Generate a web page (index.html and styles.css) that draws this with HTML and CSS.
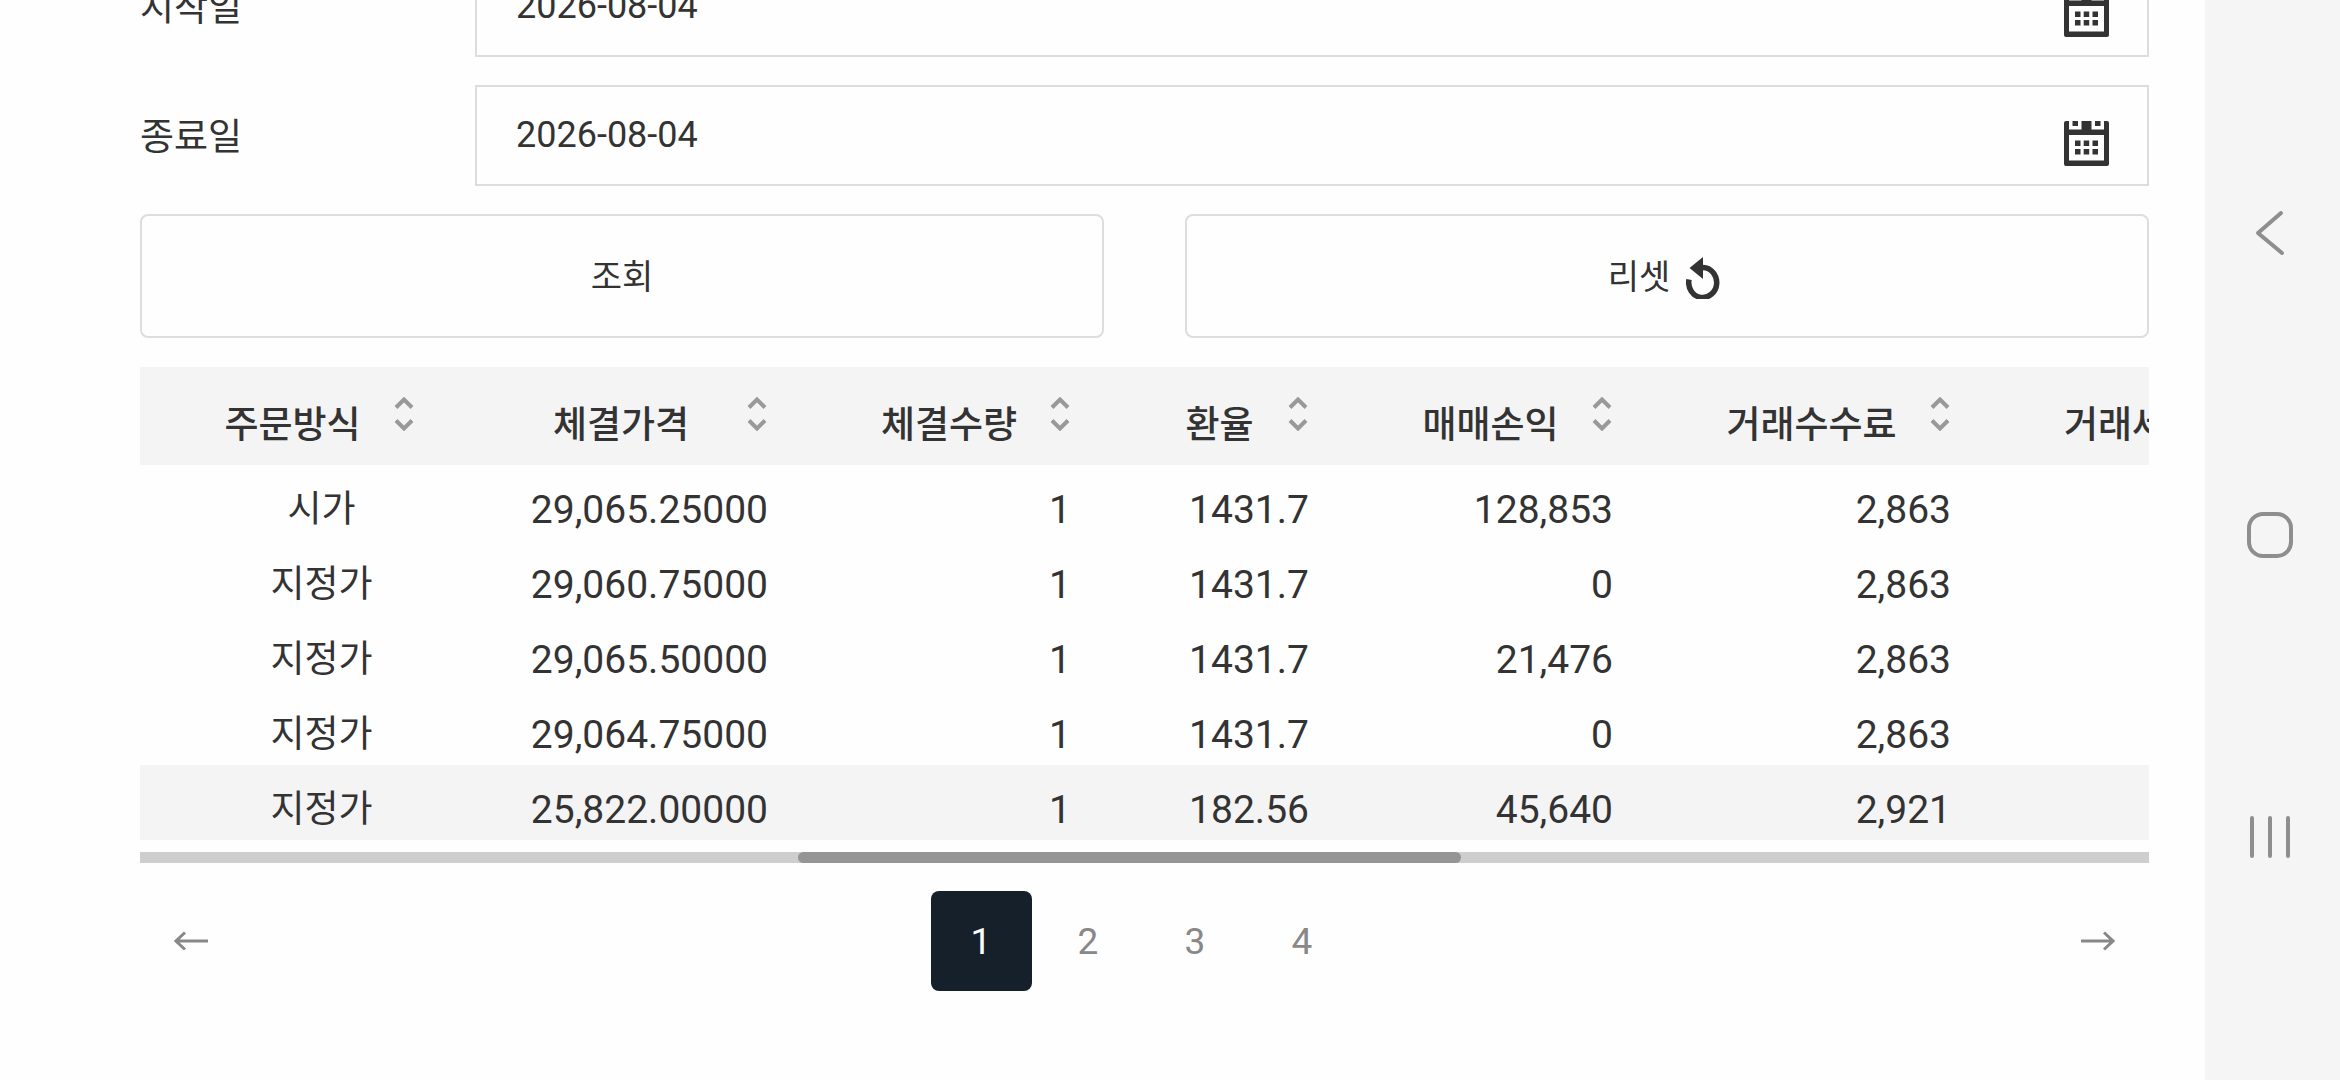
FILE: index.html
```html
<!DOCTYPE html>
<html lang="ko">
<head>
<meta charset="utf-8">
<meta name="viewport" content="width=device-width, initial-scale=1">
<title>체결내역</title>
<link rel="stylesheet" href="styles.css">
</head>
<body>
<svg class="symbols" aria-hidden="true">
  <symbol id="calendar" viewBox="0 0 45 45">
    <path fill-rule="evenodd" d="M2 0H5V8.500H17.500V0H27.500V8.500H40V0H43Q45 0 45 2V43Q45 45 43 45H2Q0 45 0 43V2Q0 0 2 0ZM5 14V39.500H40V14Z"/>
    <path d="M8.500 0H14V5H8.500ZM31 0H36.500V5H31ZM11 19.500H16.500V25H11ZM19.700 19.500H25.200V25H19.700ZM28.500 19.500H34V25H28.500ZM11 28H16.500V33.500H11ZM19.700 28H25.200V33.500H19.700ZM28.500 28H34V33.500H28.500Z"/>
  </symbol>
  <symbol id="sort" viewBox="0 0 20 34">
    <path d="M2 10.500 10 2.500 18 10.500M2 23.500 10 31.500 18 23.500"/>
  </symbol>
</svg>
<div class="screen">
  <main class="content">
    <form class="search">
      <div class="row">
        <label class="row-label" for="start">시작일</label>
        <div class="field">
          <input class="field-input" id="start" type="text" value="2026-08-04">
          <button class="field-button" type="button" aria-label="시작일 선택"><svg class="calendar"><use href="#calendar"/></svg></button>
        </div>
      </div>
      <div class="row">
        <label class="row-label" for="end">종료일</label>
        <div class="field">
          <input class="field-input" id="end" type="text" value="2026-08-04">
          <button class="field-button" type="button" aria-label="종료일 선택"><svg class="calendar"><use href="#calendar"/></svg></button>
        </div>
      </div>
      <div class="actions">
        <button class="action" type="button"><span class="action-label">조회</span></button>
        <button class="action" type="button"><span class="action-label">리셋</span>
          <svg class="reset" viewBox="0 0 34 42"><path d="M3 22.500A14 15 0 1 0 17 10.500" fill="none" stroke="currentColor" stroke-width="5.500"/><path d="M17 0V22L3.500 11Z" fill="currentColor"/></svg>
        </button>
      </div>
    </form>

    <div class="table-view">
      <table class="trades">
        <colgroup><col class="c-method"><col class="c-price"><col class="c-qty"><col class="c-rate"><col class="c-profit"><col class="c-fee"><col class="c-tax"></colgroup>
        <thead>
          <tr>
            <th><button class="sort" type="button"><span class="sort-label">주문방식</span><svg class="sort-icon"><use href="#sort"/></svg></button></th>
            <th><button class="sort" type="button"><span class="sort-label">체결가격</span><svg class="sort-icon"><use href="#sort"/></svg></button></th>
            <th><button class="sort" type="button"><span class="sort-label">체결수량</span><svg class="sort-icon"><use href="#sort"/></svg></button></th>
            <th><button class="sort" type="button"><span class="sort-label">환율</span><svg class="sort-icon"><use href="#sort"/></svg></button></th>
            <th><button class="sort" type="button"><span class="sort-label">매매손익</span><svg class="sort-icon"><use href="#sort"/></svg></button></th>
            <th><button class="sort" type="button"><span class="sort-label">거래수수료</span><svg class="sort-icon"><use href="#sort"/></svg></button></th>
            <th><button class="sort" type="button"><span class="sort-label">거래세</span></button></th>
          </tr>
        </thead>
        <tbody>
          <tr><td>시가</td><td>29,065.25000</td><td>1</td><td>1431.7</td><td>128,853</td><td>2,863</td><td></td></tr>
          <tr><td>지정가</td><td>29,060.75000</td><td>1</td><td>1431.7</td><td>0</td><td>2,863</td><td></td></tr>
          <tr><td>지정가</td><td>29,065.50000</td><td>1</td><td>1431.7</td><td>21,476</td><td>2,863</td><td></td></tr>
          <tr><td>지정가</td><td>29,064.75000</td><td>1</td><td>1431.7</td><td>0</td><td>2,863</td><td></td></tr>
          <tr class="selected"><td>지정가</td><td>25,822.00000</td><td>1</td><td>182.56</td><td>45,640</td><td>2,921</td><td></td></tr>
        </tbody>
      </table>
    </div>
    <div class="scrollbar"><div class="thumb"></div></div>

    <nav class="pager" aria-label="페이지">
      <button class="step" type="button" aria-label="이전"><svg class="arrow" viewBox="0 0 35 20"><path d="M34 10H2M11 1.500 2 10 11 18.500"/></svg></button>
      <div class="pages">
        <button class="page current" type="button" aria-current="page">1</button>
        <button class="page" type="button">2</button>
        <button class="page" type="button">3</button>
        <button class="page" type="button">4</button>
      </div>
      <button class="step" type="button" aria-label="다음"><svg class="arrow" viewBox="0 0 35 20"><path d="M1 10H33M24 1.500 33 10 24 18.500"/></svg></button>
    </nav>
  </main>

  <nav class="system" aria-label="시스템">
    <button class="system-button" type="button" aria-label="뒤로"><svg class="system-icon" viewBox="0 0 48 48"><path d="M35 4 12 24 36 44"/></svg></button>
    <button class="system-button" type="button" aria-label="홈"><svg class="system-icon" viewBox="0 0 48 48"><rect x="3" y="3" width="42" height="42" rx="14"/></svg></button>
    <button class="system-button" type="button" aria-label="최근 앱"><svg class="system-icon" viewBox="0 0 48 48"><path d="M6 5V43M24 5V43M42 5V43"/></svg></button>
  </nav>
</div>
</body>
</html>
```
FILE: styles.css
```css
* { box-sizing: border-box; }

body {
  margin: 0;
  background: #fefefe;
  color: #333;
  font-family: Roboto, "Noto Sans CJK KR", sans-serif;
  font-size: 37px;
}

button, input {
  margin: 0;
  padding: 0;
  border: 0;
  background: none;
  color: inherit;
  font: inherit;
}

.symbols { display: none; }

.screen {
  display: flex;
  height: 100vh;
  overflow: hidden;
}

.content {
  flex: 1;
  min-width: 0;
  padding: 0 56px 0 140px;
}

/* The form is scrolled partly out of view at the top */
.search {
  display: grid;
  gap: 28px;
  margin-top: -44px;
}

.row {
  display: flex;
  align-items: center;
}

.row-label {
  width: 335px;
  padding-bottom: 4px;
}

.field {
  display: flex;
  flex: 1;
  height: 101px;
  padding: 0 38px 0 39px;
  border: 2px solid #ddd;
}

.field-input {
  flex: 1;
  min-width: 0;
  padding-bottom: 2px;
  outline: 0;
  font-size: 36px;
}

.field-button { padding-top: 16px; }

.calendar {
  display: block;
  width: 45px;
  height: 45px;
  fill: #333;
}

.actions {
  display: grid;
  grid-template-columns: 1fr 1fr;
  gap: 81px;
}

.action {
  display: flex;
  align-items: center;
  justify-content: center;
  gap: 16px;
  height: 124px;
  border: 2px solid #ddd;
  border-radius: 8px;
  font-size: 34px;
}

.action-label { padding-bottom: 4px; }

.reset {
  width: 34px;
  height: 42px;
  margin: 4px 6px 0 0;
}

.table-view {
  margin-top: 29px;
  overflow: hidden;
}

.trades {
  width: 2172px;
  border-collapse: collapse;
  table-layout: fixed;
}

.c-method { width: 332px; }
.c-price { width: 353px; }
.c-qty { width: 303px; }
.c-rate { width: 238px; }
.c-profit { width: 304px; }
.c-fee { width: 338px; }
.c-tax { width: 304px; }

.trades th {
  height: 98px;
  padding: 0 58px 0 56px;
  background: #f4f4f4;
  font-weight: 500;
}

.trades td {
  height: 75px;
  padding: 15px 57px 0;
  font-size: 39px;
  line-height: 60px;
  text-align: right;
}

.trades th:first-child { padding-left: 84px; }

.trades td:first-child {
  padding-left: 88px;
  font-size: 37px;
  text-align: center;
}

.selected { background: #f4f4f4; }

.sort {
  display: flex;
  align-items: center;
  width: 100%;
}

.sort-label {
  flex: 1;
  padding-top: 12px;
  white-space: nowrap;
}

.trades th:last-child .sort-label { text-align: left; }

.sort-icon {
  flex: none;
  width: 20px;
  height: 34px;
  margin: 0 0 4px 33px;
  fill: none;
  stroke: #999;
  stroke-width: 4;
}

.scrollbar {
  height: 11px;
  margin-top: 12px;
  background: #cecece;
}

.thumb {
  width: 33%;
  height: 11px;
  margin-left: 658px;
  border-radius: 6px;
  background: #959595;
}

.pager {
  display: flex;
  align-items: center;
  justify-content: space-between;
  margin-top: 28px;
}

.pages { display: flex; }

.page {
  width: 101px;
  height: 100px;
  margin-right: 6px;
  border-radius: 8px;
  color: #888;
}

.page.current {
  background: #15202b;
  color: #fff;
}

.step { padding: 0 34px; }

.arrow {
  display: block;
  width: 35px;
  height: 20px;
  fill: none;
  stroke: #888;
  stroke-width: 3;
}

.system {
  display: flex;
  flex-direction: column;
  align-items: center;
  justify-content: center;
  gap: 254px;
  width: 135px;
  padding: 0 6px 11px 0;
  background: #f5f5f5;
}

.system-icon {
  display: block;
  width: 48px;
  height: 48px;
  fill: none;
  stroke: #8e8e8e;
  stroke-width: 4;
  stroke-linecap: round;
  stroke-linejoin: round;
}
```
